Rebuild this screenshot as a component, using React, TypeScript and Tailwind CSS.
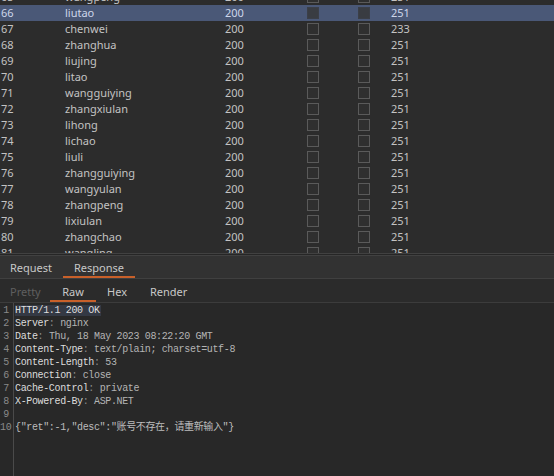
import React from "react";

const rows: [number, string, string, string][] = [
  [65, "wangpeng", "200", "251"],
  [66, "liutao", "200", "251"],
  [67, "chenwei", "200", "233"],
  [68, "zhanghua", "200", "251"],
  [69, "liujing", "200", "251"],
  [70, "litao", "200", "251"],
  [71, "wangguiying", "200", "251"],
  [72, "zhangxiulan", "200", "251"],
  [73, "lihong", "200", "251"],
  [74, "lichao", "200", "251"],
  [75, "liuli", "200", "251"],
  [76, "zhangguiying", "200", "251"],
  [77, "wangyulan", "200", "251"],
  [78, "zhangpeng", "200", "251"],
  [79, "lixiulan", "200", "251"],
  [80, "zhangchao", "200", "251"],
  [81, "wangling", "200", "251"],
];

const headers: [string, string][] = [
  ["Server", "nginx"],
  ["Date", "Thu, 18 May 2023 08:22:20 GMT"],
  ["Content-Type", "text/plain; charset=utf-8"],
  ["Content-Length", "53"],
  ["Connection", "close"],
  ["Cache-Control", "private"],
  ["X-Powered-By", "ASP.NET"],
];

function Check({ sel }: { sel: boolean }) {
  return (
    <div
      className={
        sel
          ? "w-[12px] h-[12px] border border-[#3b3f48] bg-[#393c42]"
          : "w-[12px] h-[12px] border border-[#5a5a5a] bg-[#2f2f2f]"
      }
    />
  );
}

export default function App() {
  return (
    <div
      className="w-[554px] h-[476px] bg-[#2b2b2b] flex flex-col overflow-hidden"
      style={{ fontFamily: '"Noto Sans", "Open Sans", sans-serif' }}
    >
      {/* table */}
      <div className="h-[253px] overflow-hidden bg-[#2c2c2c] text-[11px] text-[#c3c3c3]">
        <div className="flex flex-col mt-[-11px]">
          {rows.map(([n, name, st, len]) => {
            const sel = n === 66;
            return (
              <div
                key={n}
                className={
                  "h-[16px] flex items-center " +
                  (sel ? "bg-[#4a5877] text-[#cdd6ea]" : "")
                }
              >
                <div className="w-[65px] pl-[1px]">{n}</div>
                <div className="w-[160px]">{name}</div>
                <div className="w-[82px]">{st}</div>
                <div className="w-[51px]">
                  <Check sel={sel} />
                </div>
                <div className="w-[33px]">
                  <Check sel={sel} />
                </div>
                <div>{len}</div>
              </div>
            );
          })}
        </div>
      </div>
      <div className="h-[3px] bg-[#262626] border-y border-[#414141]" />

      {/* main tabs */}
      <div className="h-[22px] pt-[2px] bg-[#323232] flex items-stretch text-[11px] text-[#c8c8c8]">
        <div className="w-[63px] pl-[10px] flex items-center">Request</div>
        <div className="w-[72px] flex items-center justify-center relative">
          Response
          <div className="absolute left-0 right-0 bottom-[0px] h-[2px] bg-[#c8602a]" />
        </div>
      </div>
      <div className="h-[1px] bg-[#404040]" />

      {/* sub tabs */}
      <div className="h-[23px] pt-[3px] bg-[#2b2b2b] flex items-stretch text-[11px] text-[#c8c8c8]">
        <div className="w-[50px] pl-[10px] flex items-center text-[#5f5f5f]">Pretty</div>
        <div className="w-[46px] flex items-center justify-center relative">
          Raw
          <div className="absolute left-0 right-0 bottom-[0px] h-[2px] bg-[#c8602a]" />
        </div>
        <div className="w-[54px] pl-[11px] flex items-center">Hex</div>
        <div className="flex items-center">Render</div>
      </div>
      <div className="h-[1px] bg-[#3c3c3c]" />

      {/* editor */}
      <div
        className="flex-1 bg-[#282828] flex text-[10px] leading-[13px]"
        style={{ fontFamily: '"Liberation Mono", "Noto Sans CJK SC", monospace', letterSpacing: "-0.36px" }}
      >
        <div className="w-[14px] pt-[1px] pr-[4px] text-right text-[#8a8a8a] border-r border-[#4a4a4a] flex flex-col">
          {Array.from({ length: 10 }, (_, i) => (
            <div key={i} className="h-[13px] whitespace-nowrap">
              {i + 1}
            </div>
          ))}
        </div>
        <div className="flex flex-col pt-[1px] pl-[1px] text-[#b4b4b4]">
          <div className="h-[13px] whitespace-nowrap">
            <span className="bg-[#343944] text-[#dedede] pr-[1px]">HTTP/1.1 200 OK</span>
          </div>
          {headers.map(([k, v]) => (
            <div key={k} className="h-[13px] whitespace-nowrap">
              <span className="text-[#dcdcdc]">{k}</span>
              <span className="text-[#8c8c8c]">: </span>
              <span>{v}</span>
            </div>
          ))}
          <div className="h-[13px]" />
          <div className="h-[13px] whitespace-nowrap text-[#bdbdbd]">
            {'{"ret":-1,"desc":"账号不存在，请重新输入"}'}
          </div>
        </div>
      </div>
    </div>
  );
}
